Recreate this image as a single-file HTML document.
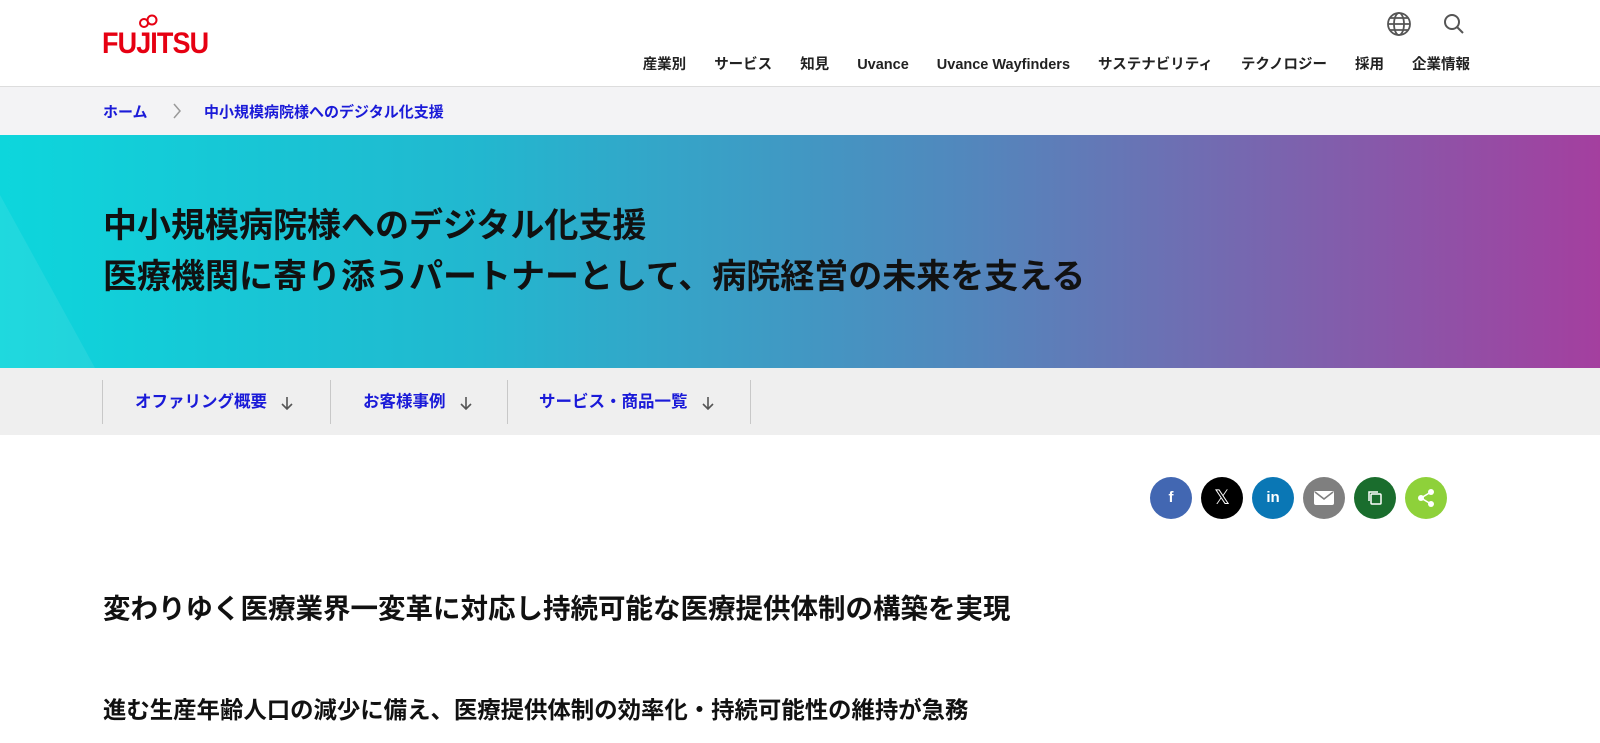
<!DOCTYPE html>
<html><head><meta charset="utf-8"><style>
*{margin:0;padding:0;box-sizing:border-box}
body{width:1600px;height:743px;overflow:hidden;background:#fff;font-family:"Liberation Sans","Noto Sans CJK JP",sans-serif;color:#1a1a1a}
.hdr{position:absolute;left:0;top:0;width:1600px;height:87px;border-bottom:1px solid #ddd}
.logo{position:absolute;left:102px;top:27px;color:#e60012;font-size:30px;font-weight:bold;letter-spacing:-1px;transform:scaleX(.9);transform-origin:left}
.nav{position:absolute;right:130px;top:53px;display:flex;align-items:baseline;gap:28px;font-size:14.5px;font-weight:bold;color:#222}
.bc{position:absolute;top:87px;left:0;width:1600px;height:48px;background:#f3f3f5;font-size:15px;font-weight:bold;color:#1a1ad8}
.hero{position:absolute;top:135px;left:0;width:1600px;height:233px;background:linear-gradient(90deg,#0dd6dc 0%,#22b7cf 30%,#5188bd 60%,#a43f9f 100%);overflow:hidden}
.hero h1{position:absolute;left:103px;top:66px;font-size:34px;line-height:51px;color:#111;font-weight:bold;white-space:nowrap}
.sub{position:absolute;top:368px;left:0;width:1600px;height:67px;background:#efefef}
.sub div{position:absolute;top:12px;height:44px;border-left:1px solid #c8c8c8;font-size:16.5px;font-weight:bold;color:#1a1ad8;line-height:44px;white-space:nowrap}
.sub svg{vertical-align:middle;margin-left:14px}
.c{position:absolute;top:477px;width:42px;height:42px;border-radius:50%;color:#fff;text-align:center;line-height:42px;font-weight:bold;font-size:15px}
h2{position:absolute;left:103px;font-weight:bold;color:#111;white-space:nowrap}
</style></head><body>
<div class="hdr">
<div class="logo">FUJITSU</div>
<svg style="position:absolute;left:137px;top:14px" width="24" height="16"><circle cx="7" cy="9" r="4" fill="none" stroke="#e60012" stroke-width="2"/><circle cx="15" cy="6" r="4.5" fill="none" stroke="#e60012" stroke-width="2"/></svg>
<svg style="position:absolute;left:1386px;top:11px" width="26" height="26" fill="none" stroke="#555" stroke-width="1.8"><circle cx="13" cy="13" r="11"/><ellipse cx="13" cy="13" rx="5" ry="11"/><path d="M2 13h22M4 7h18M4 19h18"/></svg>
<svg style="position:absolute;left:1442px;top:12px" width="24" height="24" fill="none" stroke="#555" stroke-width="2"><circle cx="10" cy="10" r="7"/><path d="M15 15l6 6"/></svg>
<div class="nav"><span>産業別</span><span>サービス</span><span>知見</span><span>Uvance</span><span>Uvance Wayfinders</span><span>サステナビリティ</span><span>テクノロジー</span><span>採用</span><span>企業情報</span></div>
</div>
<div class="bc"><span style="position:absolute;left:103px;top:14px">ホーム</span><svg style="position:absolute;left:172px;top:16px" width="10" height="16" fill="none" stroke="#999" stroke-width="1.5"><path d="M2 1l6 7-6 7"/></svg><span style="position:absolute;left:204px;top:14px">中小規模病院様へのデジタル化支援</span></div>
<div class="hero">
<svg style="position:absolute;left:0;top:0" width="120" height="233"><polygon points="0,60 95,233 0,233" fill="#fff" opacity=".08"/></svg>
<h1>中小規模病院様へのデジタル化支援<br>医療機関に寄り添うパートナーとして、病院経営の未来を支える</h1>
</div>
<div class="sub">
<div style="left:102px;width:229px;padding-left:32px">オファリング概要<svg width="12" height="14" fill="none" stroke="#555" stroke-width="1.6"><path d="M6 1v12M1 8l5 5 5-5"/></svg></div>
<div style="left:330px;width:178px;padding-left:32px">お客様事例<svg width="12" height="14" fill="none" stroke="#555" stroke-width="1.6"><path d="M6 1v12M1 8l5 5 5-5"/></svg></div>
<div style="left:507px;width:244px;padding-left:31px;border-right:1px solid #c8c8c8">サービス・商品一覧<svg width="12" height="14" fill="none" stroke="#555" stroke-width="1.6"><path d="M6 1v12M1 8l5 5 5-5"/></svg></div>
</div>
<div class="c" style="left:1150px;background:#4267b2">f</div>
<div class="c" style="left:1201px;background:#000;font-weight:normal;font-size:20px">𝕏</div>
<div class="c" style="left:1252px;background:#0a77b5">in</div>
<div class="c" style="left:1303px;background:#7f7f7f"><svg width="20" height="14" style="margin-top:14px"><rect width="20" height="14" rx="2" fill="#fff"/><path d="M1 1l9 7 9-7" stroke="#7f7f7f" fill="none" stroke-width="1.6"/></svg></div>
<div class="c" style="left:1354px;background:#1a6d2d"><svg width="16" height="16" style="margin-top:13px" fill="none" stroke="#fff" stroke-width="1.5"><rect x="4" y="4" width="10" height="10" rx="1"/><path d="M2 11V2h9"/></svg></div>
<div class="c" style="left:1405px;background:#8ed13a"><svg width="18" height="18" style="margin-top:12px" fill="#fff"><circle cx="14" cy="3" r="3"/><circle cx="4" cy="9" r="3"/><circle cx="14" cy="15" r="3"/><path d="M14 3L4 9l10 6" stroke="#fff" stroke-width="1.6" fill="none"/></svg></div>
<h2 style="top:586px;font-size:27.5px">変わりゆく医療業界一変革に対応し持続可能な医療提供体制の構築を実現</h2>
<h2 style="top:691px;font-size:23.4px">進む生産年齢人口の減少に備え、医療提供体制の効率化・持続可能性の維持が急務</h2>
</body></html>
